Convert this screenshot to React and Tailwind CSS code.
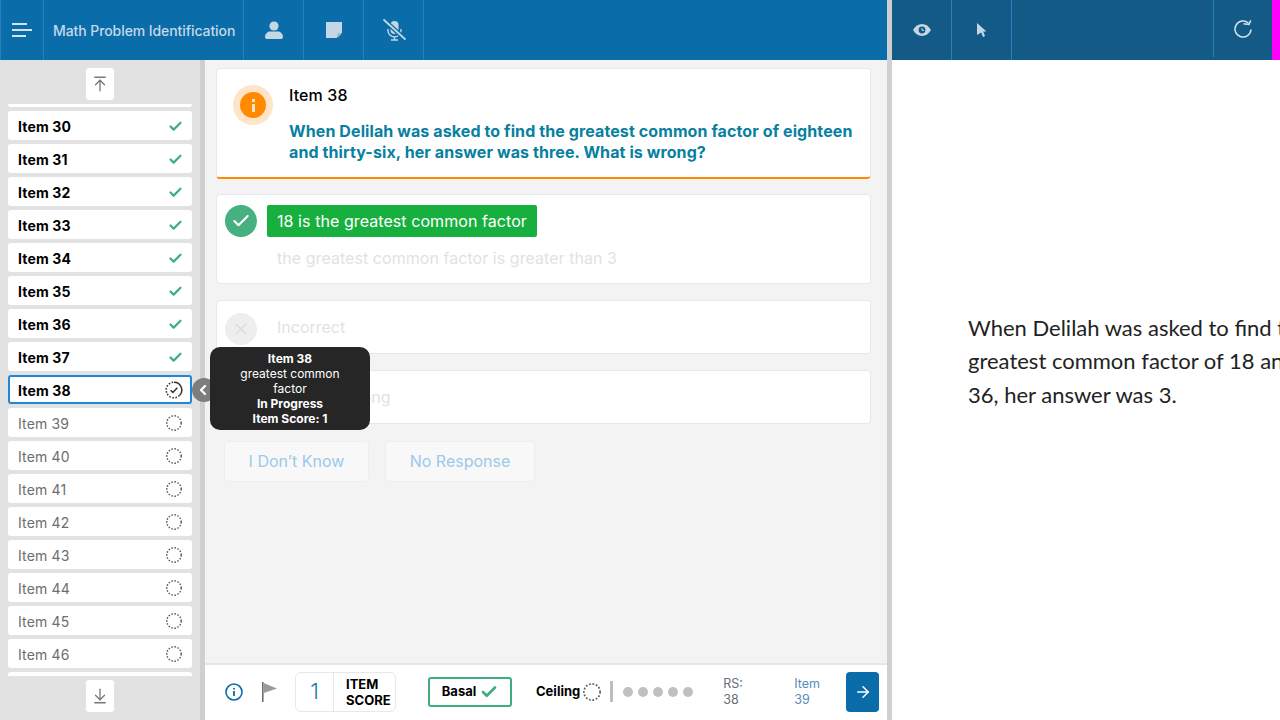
import React from 'react';
import { ArrowRight, ArrowDownToLine, ArrowUpToLine, Check, ChevronLeft, X } from 'lucide-react';

const doneItems = [30, 31, 32, 33, 34, 35, 36, 37];
const todoItems = [39, 40, 41, 42, 43, 44, 45, 46];

const DashedCircle = ({ size = 16 }) => (
  <svg width={size} height={size} viewBox="0 0 16 16" fill="none">
    <circle cx="8" cy="8" r="7.2" stroke="#5f5f5f" strokeWidth="1.5" strokeDasharray="1.6 1.5" />
  </svg>
);

const ProgressCircle = () => (
  <svg width="18" height="18" viewBox="0 0 18 18" fill="none">
    <path d="M9 1.2a7.8 7.8 0 0 1 5.500 13.300" stroke="#333" strokeWidth="1.500" />
    <path d="M14.500 14.500A7.800 7.800 0 1 1 9 1.200" stroke="#333" strokeWidth="1.500" strokeDasharray="1.600 1.500" />
    <path d="M5.600 9.200l2.300 2.200 4.400-4.600" stroke="#333" strokeWidth="1.500" />
  </svg>
);

const UserIcon = () => (
  <svg width="18" height="18" viewBox="0 0 18 18" fill="#c5d6e4">
    <circle cx="9" cy="5" r="4.6" />
    <path d="M0 16c0-3.600 3-5.600 5.200-5.600h7.600c2.200 0 5.200 2 5.200 5.600 0 1.300-.8 2-2 2H2c-1.200 0-2-.7-2-2z" />
  </svg>
);

const NoteIcon = () => (
  <svg width="16" height="16" viewBox="0 0 16 16">
    <path d="M0 0h16v10.500L10.500 16H0z" fill="#c5d6e4" />
    <path d="M11.500 11.500H16L11.500 16z" fill="#8fb3cf" />
  </svg>
);

const MicOffIcon = () => (
  <svg width="24" height="24" viewBox="0 0 24 24" fill="none">
    <rect x="8.500" y="3" width="8" height="13" rx="4" fill="#c5d6e4" />
    <path d="M6 11v1.500a6.500 6.500 0 0 0 13 0V11M12.500 19v3M9 22h7" stroke="#c5d6e4" strokeWidth="1.400" />
    <path d="M1.500 1.500l22 20" stroke="#0a6ca8" strokeWidth="4.500" />
    <path d="M1.500 1.500l22 20" stroke="#c5d6e4" strokeWidth="1.800" />
  </svg>
);

const EyeIcon = () => (
  <svg width="18" height="12" viewBox="0 0 18 12">
    <path d="M0 6c2.200-3.800 5.300-6 9-6s6.800 2.200 9 6c-2.200 3.800-5.300 6-9 6S2.200 9.800 0 6z" fill="#c5d6e4" />
    <circle cx="9" cy="6" r="3.400" fill="#145a87" />
    <path d="M9 4v2.300h2" stroke="#c5d6e4" strokeWidth="1" fill="none" />
  </svg>
);

const CursorIcon = () => (
  <svg width="10" height="14" viewBox="0 0 10 14" fill="#c5d6e4">
    <path d="M0 0l9.500 8.500H6.200L8 13l-2 1-1.800-4.600L0 12z" />
  </svg>
);

const RefreshIcon = () => (
  <svg width="20" height="20" viewBox="0 0 20 20" fill="none">
    <path d="M15.500 4.200A8 8 0 1 0 18 10.500" stroke="#d5e3ee" strokeWidth="1.500" />
    <path d="M10.500 4.800l5.500.6 1.700-4" stroke="#d5e3ee" strokeWidth="1.500" />
  </svg>
);

const FlagIcon = () => (
  <svg width="16" height="20" viewBox="0 0 16 20">
    <path d="M1 0h1.600v20H1z" fill="#6f6f6f" />
    <path d="M2.600 1L16 6.500 2.600 11z" fill="#9a9a9a" />
  </svg>
);

const SideItem = ({ label, done, children }) => (
  <div
    className={`flex h-[29px] shrink-0 items-center justify-between rounded-[3px] bg-white pl-[10px] pr-[9px] pt-px text-[14px] tracking-[0.15px] ${
      done ? 'font-bold text-black' : 'text-[#6e6e6e]'
    }`}
  >
    <span>{label}</span>
    {children}
  </div>
);

const ScrollButton = ({ children }) => (
  <div className="flex h-8 w-7 items-center justify-center rounded-[3px] bg-white">{children}</div>
);

const Sidebar = () => (
  <div className="flex w-[205px] shrink-0 flex-col border-r-[5px] border-[#cfcfcf] bg-[#e2e2e2]">
    <div className="flex justify-center pt-2">
      <ScrollButton>
        <ArrowUpToLine size={18} strokeWidth={1.750} className="text-[#777]" />
      </ScrollButton>
    </div>
    <div className="mx-2 mt-1 flex h-[572px] flex-col gap-1 overflow-hidden">
      <div className="h-[3px] shrink-0 rounded-b-[3px] bg-white" />
      {doneItems.map((n) => (
        <SideItem key={n} label={`Item ${n}`} done>
          <Check size={15} strokeWidth={3.500} className="text-[#3fae7f]" />
        </SideItem>
      ))}
      <div className="flex h-[29px] shrink-0 items-center justify-between rounded-[3px] border-2 border-[#2286d6] bg-white pl-2 pr-[7px] pt-px text-[14px] font-bold tracking-[0.15px] text-black">
        <span>Item 38</span>
        <ProgressCircle />
      </div>
      {todoItems.map((n) => (
        <SideItem key={n} label={`Item ${n}`}>
          <div className="mr-px">
            <DashedCircle />
          </div>
        </SideItem>
      ))}
      <div className="h-[29px] shrink-0 rounded-[3px] bg-white" />
    </div>
    <div className="flex justify-center pt-1">
      <ScrollButton>
        <ArrowDownToLine size={18} strokeWidth={1.750} className="text-[#777]" />
      </ScrollButton>
    </div>
  </div>
);

const Card = ({ className, children }) => (
  <div className={`rounded-[4px] border border-[#e6e8f0] bg-white ${className}`}>{children}</div>
);

const Content = () => (
  <div className="flex flex-1 flex-col bg-[#f3f3f4] pl-[11px] pr-4 pt-2">
    <Card className="flex h-[111px] border-b-2 border-b-[#ff8a00] pl-4 pt-4">
      <div className="flex h-10 w-10 shrink-0 items-center justify-center rounded-full bg-[#ffe4c8]">
        <div className="flex h-[26px] w-[26px] flex-col items-center justify-center gap-[2px] rounded-full bg-[#ff8a00]">
          <div className="h-[3px] w-[3px] bg-[#ffe4c8]" />
          <div className="h-2 w-[3px] bg-[#ffe4c8]" />
        </div>
      </div>
      <div className="ml-4">
        <div className="text-[16px] font-medium leading-5 tracking-[0.1px] text-black">Item 38</div>
        <div className="mt-4 text-[16px] font-bold leading-[21px] tracking-[0.1px] text-[#08809f]">
          When Delilah was asked to find the greatest common factor of eighteen
          <br />
          and thirty-six, her answer was three. What is wrong?
        </div>
      </div>
    </Card>
    <Card className="mt-[15px] h-[90px] pl-2 pt-[10px]">
      <div className="flex items-center gap-[10px]">
        <div className="flex h-8 w-8 items-center justify-center rounded-full bg-[#46b080]">
          <Check size={20} strokeWidth={2.500} className="text-white" />
        </div>
        <div className="flex h-8 w-[270px] items-center rounded-[2px] bg-[#17b03f] pl-[10px] text-[16px] tracking-[0.07px] text-white">
          18 is the greatest common factor
        </div>
      </div>
      <div className="ml-[52px] mt-[11px] text-[16px] leading-5 tracking-[0.05px] text-[#e2e2e4]">
        the greatest common factor is greater than 3
      </div>
    </Card>
    <Card className="mt-4 flex h-[54px] items-center pl-2">
      <div className="mt-1 flex h-8 w-8 items-center justify-center rounded-full bg-[#eeeeee]">
        <X size={20} strokeWidth={1.500} className="text-[#dcdcdc]" />
      </div>
      <span className="ml-[20px] text-[16px] text-[#e2e2e4]">Incorrect</span>
    </Card>
    <Card className="mt-4 flex h-[54px] items-center pl-[60px]">
      <span className="text-[16px] tracking-[0.2px] text-[#e2e2e4]">Answer Wrong</span>
    </Card>
    <div className="ml-2 mt-[17px] flex gap-4 text-[16px] text-[#9cc9ea]">
      <div className="flex h-[41px] w-[145px] items-center justify-center rounded-[4px] border border-[#eeeeee] bg-[#f8f8f9] pb-[2px]">
        I Don’t Know
      </div>
      <div className="flex h-[41px] w-[150px] items-center justify-center rounded-[4px] border border-[#eeeeee] bg-[#f8f8f9] pb-[2px]">
        No Response
      </div>
    </div>
  </div>
);

const BottomBar = () => (
  <div className="flex h-[57px] shrink-0 items-center border-t-2 border-[#e6e6e6] bg-white pb-[2px]">
    <svg className="ml-5" width="18" height="18" viewBox="0 0 18 18" fill="none">
      <circle cx="9" cy="9" r="8" stroke="#0a6ca8" strokeWidth="1.600" />
      <path d="M9 8v5M9 5v1.600" stroke="#0a6ca8" strokeWidth="1.800" />
    </svg>
    <div className="ml-[18px]">
      <FlagIcon />
    </div>
    <div className="ml-[18px] flex h-10 w-[101px] overflow-hidden rounded-[6px] border border-[#e6e8f0]">
      <div className="flex w-[38px] items-center justify-center border-r border-[#e6e8f0] text-[22px] font-light text-[#1f78b8]">1</div>
      <div className="pl-3 pt-[3px] text-[13px] font-bold leading-[16px] text-black">
        ITEM
        <br />
        SCORE
      </div>
    </div>
    <div className="ml-8 flex h-[30px] w-[84px] items-center justify-center gap-1 rounded-[3px] border-2 border-[#3fae7f] pt-px text-[13px] font-bold text-black">
      Basal
      <Check size={18} strokeWidth={3.500} className="text-[#3fae7f]" />
    </div>
    <div className="ml-6 pt-px text-[13px] font-bold text-black">Ceiling</div>
    <div className="ml-[3px] pt-px">
      <DashedCircle size={18} />
    </div>
    <div className="ml-[9px] h-[21px] w-[3px] bg-[#bdbdbd]" />
    <div className="ml-[10px] flex gap-[5px]">
      {[0, 1, 2, 3, 4].map((n) => (
        <div key={n} className="h-[10px] w-[10px] rounded-full bg-[#c0c0c0]" />
      ))}
    </div>
    <div className="ml-[30px] w-[71px] pt-px text-[12.5px] leading-4 text-[#66707a]">
      RS:
      <br />
      38
    </div>
    <div className="w-[52px] pt-px text-[12.5px] leading-4 text-[#5b8cb8]">
      Item
      <br />
      39
    </div>
    <div className="flex h-10 w-[33px] items-center justify-center rounded-[4px] bg-[#0a6ca8]">
      <ArrowRight size={18} strokeWidth={2} className="text-white" />
    </div>
  </div>
);

const HeaderCell = ({ children }) => (
  <div className="flex h-[60px] w-[60px] shrink-0 items-center justify-center border-r border-[#2a80b8]">
    {children}
  </div>
);

const App = () => {
  return (
    <div className="relative flex h-screen w-[1280px] overflow-hidden bg-white font-['Inter',sans-serif]">
      <div className="flex w-[887px] shrink-0 flex-col">
        <div className="flex h-[60px] shrink-0 bg-[#0a6ca8]">
          <div className="flex h-[60px] w-[44px] shrink-0 items-center justify-center border-x border-[#2a80b8]">
            <div className="flex w-5 flex-col gap-[4px]">
              <div className="h-[2px] w-[15px] bg-[#d5e3ee]" />
              <div className="h-[2px] w-5 bg-[#d5e3ee]" />
              <div className="h-[2px] w-[14px] bg-[#d5e3ee]" />
            </div>
          </div>
          <div className="flex h-[60px] w-[200px] items-center border-r border-[#2a80b8] pl-[9px] text-[14px] font-medium tracking-[-0.08px] text-[#c5d9e8]">
            Math Problem Identification
          </div>
          <HeaderCell>
            <UserIcon />
          </HeaderCell>
          <HeaderCell>
            <NoteIcon />
          </HeaderCell>
          <HeaderCell>
            <MicOffIcon />
          </HeaderCell>
        </div>
        <div className="flex min-h-0 flex-1">
          <Sidebar />
          <div className="flex min-w-0 flex-1 flex-col">
            <Content />
            <BottomBar />
          </div>
        </div>
      </div>
      <div className="w-[5px] shrink-0 bg-[#d0d0d0]" />
      <div className="flex min-w-0 flex-1 flex-col">
        <div className="flex h-[60px] shrink-0 bg-[#145a87]">
          <HeaderCell>
            <EyeIcon />
          </HeaderCell>
          <HeaderCell>
            <CursorIcon />
          </HeaderCell>
          <div className="flex-1" />
          <div className="flex h-[57px] w-[59px] items-center justify-center border-l border-[#2a80b8]">
            <RefreshIcon />
          </div>
          <div className="w-2 bg-[#ff00ff]" />
        </div>
        <div className="overflow-hidden pl-[76px] pt-[251px] font-['Lato',sans-serif] text-[22px] leading-[33.4px] text-[#222]">
          <div className="w-[400px]">
            When Delilah was asked to find the
            <br />
            greatest common factor of 18 and
            <br />
            36, her answer was 3.
          </div>
        </div>
      </div>

      <div className="absolute left-[192px] top-[378px] flex h-6 w-6 items-center justify-center rounded-full bg-[#7d7d7d]">
        <ChevronLeft size={16} strokeWidth={3.500} className="-ml-[3px] text-white" />
      </div>
      <div className="absolute left-[210px] top-[347px] flex h-[83px] w-40 flex-col items-center rounded-[10px] bg-[#262626] pt-1 text-center text-[12px] leading-[15px] text-white">
        <div className="font-bold">Item 38</div>
        <div className="w-[120px]">greatest common factor</div>
        <div className="font-bold">In Progress</div>
        <div className="font-bold">Item Score: 1</div>
      </div>
    </div>
  );
};

export default App;
